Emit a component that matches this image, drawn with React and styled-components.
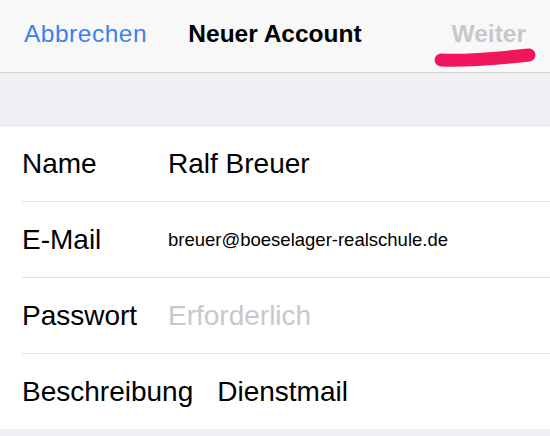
import React from 'react';
import styled, { createGlobalStyle } from 'styled-components';

const GlobalStyle = createGlobalStyle`
  html, body {
    margin: 0;
    padding: 0;
    background: #efeff4;
    font-family: "Liberation Sans", Arial, sans-serif;
  }
`

const Page = styled.div`
  width: 550px;
  height: 436px;
  overflow: hidden;
  background: #efeff4;
`

const NavBar = styled.div`
  position: relative;
  height: 73px;
  box-sizing: border-box;
  display: grid;
  grid-template-columns: 1fr auto 1fr;
  align-items: center;
  padding: 0 24px 5px;
  background: #f8f8f9;
  border-bottom: 1px solid #d2d2d6;
  font-size: 24.5px;
`

const NavButton = styled.span`
  color: ${p => (p.$disabled ? '#c8c8cc' : '#3b80f0')};
  font-weight: ${p => (p.$bold ? 'bold' : 'normal')};
  justify-self: ${p => p.$align || 'start'};
  letter-spacing: ${p => (p.$bold ? '0' : '0.5px')};
  cursor: pointer;
`

const Title = styled.span`
  color: #000;
  font-weight: bold;
`

const Marker = styled.svg`
  position: absolute;
  left: 432px;
  top: 45px;
  width: 106px;
  height: 26px;
`

const List = styled.div`
  margin-top: 52px;
  background: #fff;
  padding-left: 22px;
  border-top: 1px solid #e4e4e8;
`

const Row = styled.div`
  height: 76px;
  box-sizing: border-box;
  display: flex;
  align-items: center;
  gap: 24px;
  border-bottom: 1px solid #e0e0e4;
  font-size: 28px;
  color: #000;

  &:last-child { border-bottom: none; height: 75px; }
`

const Label = styled.span`
  min-width: 122px;
  white-space: nowrap;
`

const Value = styled.span`
  font-size: ${p => p.$size || 28}px;
  color: ${p => (p.$placeholder ? '#c7c7cd' : '#000')};
  white-space: nowrap;
`

const fields = [
  { label: 'Name', value: 'Ralf Breuer' },
  { label: 'E-Mail', value: 'breuer@boeselager-realschule.de', size: 18.5 },
  { label: 'Passwort', value: 'Erforderlich', placeholder: true },
  { label: 'Beschreibung', value: 'Dienstmail' },
]

export default function App() {
  return (
    <Page>
      <GlobalStyle />
      <NavBar>
        <NavButton>Abbrechen</NavButton>
        <Title>Neuer Account</Title>
        <NavButton $align="end" $bold $disabled>Weiter</NavButton>
        <Marker viewBox="0 0 106 26">
          <path
            d="M 9 15 C 30 16, 60 14, 97 10"
            stroke="#f0165c"
            strokeWidth="13"
            strokeLinecap="round"
            fill="none"
          />
        </Marker>
      </NavBar>
      <List>
        {fields.map(f => (
          <Row key={f.label}>
            <Label>{f.label}</Label>
            <Value $size={f.size} $placeholder={f.placeholder}>{f.value}</Value>
          </Row>
        ))}
      </List>
    </Page>
  )
}
